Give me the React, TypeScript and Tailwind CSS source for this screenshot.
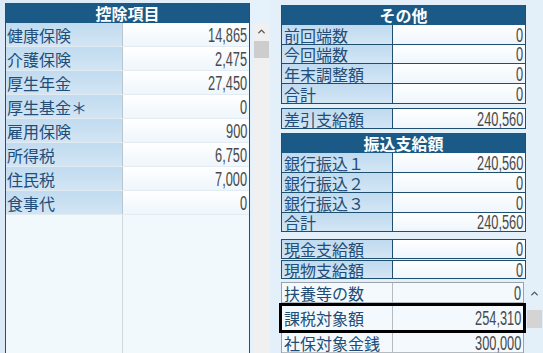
import { ChevronUp } from "lucide-react";

type Row = { label: string; value: string };

const deductions: Row[] = [
  { label: "健康保険", value: "14,865" },
  { label: "介護保険", value: "2,475" },
  { label: "厚生年金", value: "27,450" },
  { label: "厚生基金＊", value: "0" },
  { label: "雇用保険", value: "900" },
  { label: "所得税", value: "6,750" },
  { label: "住民税", value: "7,000" },
  { label: "食事代", value: "0" },
];

const others: Row[] = [
  { label: "前回端数", value: "0" },
  { label: "今回端数", value: "0" },
  { label: "年末調整額", value: "0" },
  { label: "合計", value: "0" },
];

const transfers: Row[] = [
  { label: "銀行振込１", value: "240,560" },
  { label: "銀行振込２", value: "0" },
  { label: "銀行振込３", value: "0" },
  { label: "合計", value: "240,560" },
];

const jp = "font-['Noto_Sans_CJK_JP',sans-serif]";

function Num({ v }: { v: string }) {
  return (
    <span className="inline-block origin-right scale-x-[0.64] font-['Liberation_Sans',sans-serif] text-[20px] leading-none text-[#4a4a4a]">
      {v}
    </span>
  );
}

function Header({ title, h }: { title: string; h: string }) {
  return (
    <div
      className={`${h} flex items-center justify-center bg-[#1b5a86] text-[16px] font-bold leading-none text-white ${jp}`}
    >
      {title}
    </div>
  );
}

// blue label / white value row used in the right-hand boxes
function BlueRow({ row, h, last }: { row: Row; h: string; last?: boolean }) {
  return (
    <div className={`${h} flex ${last ? "" : "border-b border-[#1f4e6e]"}`}>
      <div
        className={`flex w-[111px] shrink-0 items-center border-r border-[#1f4e6e] bg-gradient-to-b from-[#c0daef] to-[#d3e6f5] pl-[2px] text-[16px] leading-none text-[#214d78] ${jp}`}
      >
        {row.label}
      </div>
      <div className="flex flex-1 items-center justify-end bg-gradient-to-b from-[#ffffff] to-[#eef6fc] pr-[2px]">
        <Num v={row.value} />
      </div>
    </div>
  );
}

export default function App() {
  return (
    <div className="flex h-[353px] w-[543px] overflow-hidden bg-[#e3f0fa]">
      {/* left: deductions */}
      <div className="flex w-[270px] shrink-0 bg-gradient-to-r from-[#dbeaf6] to-[#e6f2fb] pl-[5px] pt-[3px]">
        <div className="flex h-[360px] w-[245px] flex-col border-x border-[#2d4f66] bg-[#f1f9fd]">
          <Header title="控除項目" h="h-[20px]" />
          {deductions.map((r) => (
            <div key={r.label} className="flex h-[24px] border-b border-[#e2ebf1]">
              <div
                className={`flex w-[117px] shrink-0 items-center border-r border-[#b9c6cf] bg-gradient-to-b from-[#c1dbef] to-[#d2e5f4] pl-[1px] text-[16px] leading-none text-[#214d78] ${jp}`}
              >
                {r.label}
              </div>
              <div className="flex flex-1 items-center justify-end bg-gradient-to-b from-[#ffffff] to-[#eef6fc] pr-[2px]">
                <Num v={r.value} />
              </div>
            </div>
          ))}
          <div className="flex flex-1">
            <div className="w-[117px] shrink-0 border-r border-[#cfd9df]" />
            <div className="flex-1" />
          </div>
        </div>
        <div className="ml-[3px] mt-[21px] flex w-[16px] flex-col items-center bg-[#f0f0f0]">
          <ChevronUp size={11} strokeWidth={3} className="mt-[2px] text-[#555]" />
          <div className="mt-[4px] h-[17px] w-[15px] bg-[#cdcdcd]" />
        </div>
      </div>

      {/* right: other / transfers */}
      <div className="flex flex-1 flex-col pl-[11px] pt-[5px]">
        <div className="w-[245px] border-x border-b border-[#1f4e6e]">
          <Header title="その他" h="h-[20px]" />
          <BlueRow row={others[0]} h="h-[20px]" />
          <BlueRow row={others[1]} h="h-[19px]" />
          <BlueRow row={others[2]} h="h-[20px]" />
          <BlueRow row={others[3]} h="h-[19px]" last />
        </div>
        <div className="mt-[4px] w-[245px] border border-[#1f4e6e]">
          <BlueRow row={{ label: "差引支給額", value: "240,560" }} h="h-[19px]" last />
        </div>
        <div className="mt-[4px] w-[245px] border-x border-b border-[#1f4e6e]">
          <Header title="振込支給額" h="h-[20px]" />
          <BlueRow row={transfers[0]} h="h-[20px]" />
          <BlueRow row={transfers[1]} h="h-[20px]" />
          <BlueRow row={transfers[2]} h="h-[20px]" />
          <BlueRow row={transfers[3]} h="h-[18px]" last />
        </div>
        <div className="mt-[7px] w-[245px] border border-[#1f4e6e]">
          <BlueRow row={{ label: "現金支給額", value: "0" }} h="h-[18px]" last />
        </div>
        <div className="mt-[1px] w-[245px] border border-[#1f4e6e]">
          <BlueRow row={{ label: "現物支給額", value: "0" }} h="h-[17px]" last />
        </div>

        <div className="mt-[3px] flex">
          <div className="w-[243px] border-x border-t border-[#9aa3a9] bg-[#f3f9fc]">
            {[
              { label: "扶養等の数", value: "0", hl: false },
              { label: "課税対象額", value: "254,310", hl: true },
              { label: "社保対象金銭", value: "300,000", hl: false },
            ].map((r) => (
              <div
                key={r.label}
                className={`flex ${
                  r.hl
                    ? "relative z-10 my-[3px] h-[24px] outline-[3px] outline-black"
                    : "h-[20px] border-b border-[#b4bcc2]"
                }`}
              >
                <div
                  className={`flex w-[111px] shrink-0 items-center border-r border-[#b4bcc2] pl-[2px] text-[16px] leading-none text-[#214d78] ${jp}`}
                >
                  {r.label}
                </div>
                <div className="flex flex-1 items-center justify-end pr-[2px]">
                  <Num v={r.value} />
                </div>
              </div>
            ))}
          </div>
          <div className="ml-[2px] flex w-[16px] flex-col items-center">
            <ChevronUp size={11} strokeWidth={3} className="mt-[6px] text-[#555]" />
            <div className="mt-[11px] h-[18px] w-[15px] bg-[#d4d4d4]" />
          </div>
        </div>
      </div>
    </div>
  );
}
